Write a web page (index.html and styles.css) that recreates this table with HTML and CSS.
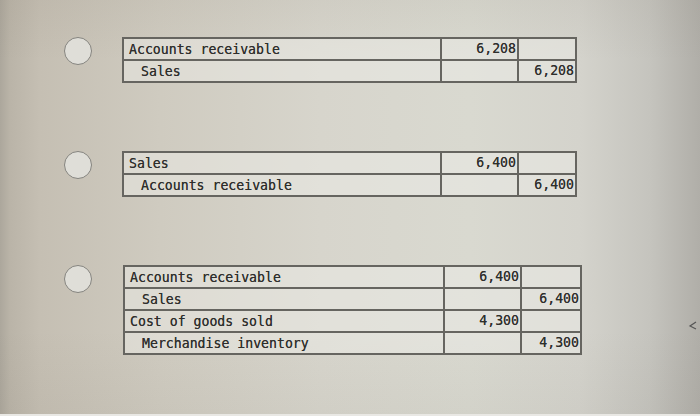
FILE: index.html
```html
<!DOCTYPE html>
<html>
<head>
<meta charset="utf-8">
<link rel="stylesheet" href="styles.css">
</head>
<body>
<div class="screen">
  <div class="options">
    <div class="option">
      <span class="radio"></span>
      <table class="journal">
        <colgroup><col class="c-acct"><col class="c-dr"><col class="c-cr"></colgroup>
        <tr><td class="acct">Accounts receivable</td><td class="num">6,208</td><td class="num"></td></tr>
        <tr><td class="acct credit">Sales</td><td class="num"></td><td class="num">6,208</td></tr>
      </table>
    </div>
    <div class="option">
      <span class="radio"></span>
      <table class="journal">
        <colgroup><col class="c-acct"><col class="c-dr"><col class="c-cr"></colgroup>
        <tr><td class="acct">Sales</td><td class="num">6,400</td><td class="num"></td></tr>
        <tr><td class="acct credit">Accounts receivable</td><td class="num"></td><td class="num">6,400</td></tr>
      </table>
    </div>
    <div class="option">
      <span class="radio"></span>
      <table class="journal wide">
        <colgroup><col class="c-acct"><col class="c-dr"><col class="c-cr"></colgroup>
        <tr><td class="acct">Accounts receivable</td><td class="num">6,400</td><td class="num"></td></tr>
        <tr><td class="acct credit">Sales</td><td class="num"></td><td class="num">6,400</td></tr>
        <tr><td class="acct">Cost of goods sold</td><td class="num">4,300</td><td class="num"></td></tr>
        <tr><td class="acct credit">Merchandise inventory</td><td class="num"></td><td class="num">4,300</td></tr>
      </table>
    </div>
  </div>
  <svg class="mark" width="10" height="12" viewBox="0 0 10 12"><path d="M8 2 L2 6 L8 9" fill="none" stroke="#555" stroke-width="1.2"/></svg>
</div>
</body>
</html>
```
FILE: styles.css
```css
html, body {
  margin: 0;
  padding: 0;
}
body {
  width: 700px;
  height: 416px;
  overflow: hidden;
  background: #e9e8e4;
}
.screen {
  position: relative;
  width: 700px;
  height: 414px;
  background:
    linear-gradient(180deg, rgba(120,110,95,0.08) 0px, rgba(120,110,95,0) 60px, rgba(0,0,0,0) 330px, rgba(90,85,75,0.05) 414px),
    linear-gradient(90deg, #aca79c 0px, #bab4a8 10px, #c5bfb3 40px, #cfcbc0 160px, #d7d5cc 320px, #d9d9d0 470px, #d4d3cc 580px, #c5c4be 650px, #b0aea8 700px);
  font-family: "DejaVu Sans Mono", "Liberation Mono", monospace;
}
.options {
  display: flex;
  flex-direction: column;
  gap: 68px;
  padding: 37px 0 0 64px;
}
.option {
  display: flex;
  align-items: flex-start;
  gap: 30px;
}
.radio {
  display: block;
  flex: none;
  width: 26px;
  height: 26px;
  margin-top: 0;
  border: 1.5px solid #85847f;
  border-radius: 50%;
  background: #dfded8;
}
.journal {
  border-collapse: collapse;
  table-layout: fixed;
  width: 453px;
  background: rgba(240,240,234,0.45);
  color: #2e2e2c;
  font-size: 13.2px;
  text-shadow: 0 0 0.5px rgba(40,40,38,0.8);
}
.journal .c-acct { width: 318px; }
.journal .c-dr { width: 77px; }
.journal .c-cr { width: 58px; }
.journal.wide {
  width: 457px;
  margin-left: 1px;
}
.journal.wide .c-acct { width: 320px; }
.journal.wide .c-cr { width: 60px; }
.journal tr {
  height: 22px;
}
.journal.wide tr {
  height: 22px;
}
.journal td {
  border: 2px solid #666560;
  padding: 0 2px 0 5px;
  line-height: 16px;
  vertical-align: middle;
  white-space: nowrap;
}
.journal td.acct {
  padding-top: 2px;
}
.journal td.credit {
  padding-left: 17px;
}
.journal td.num {
  text-align: right;
  padding-right: 1px;
}
.mark {
  position: absolute;
  left: 688px;
  top: 320px;
}
```
